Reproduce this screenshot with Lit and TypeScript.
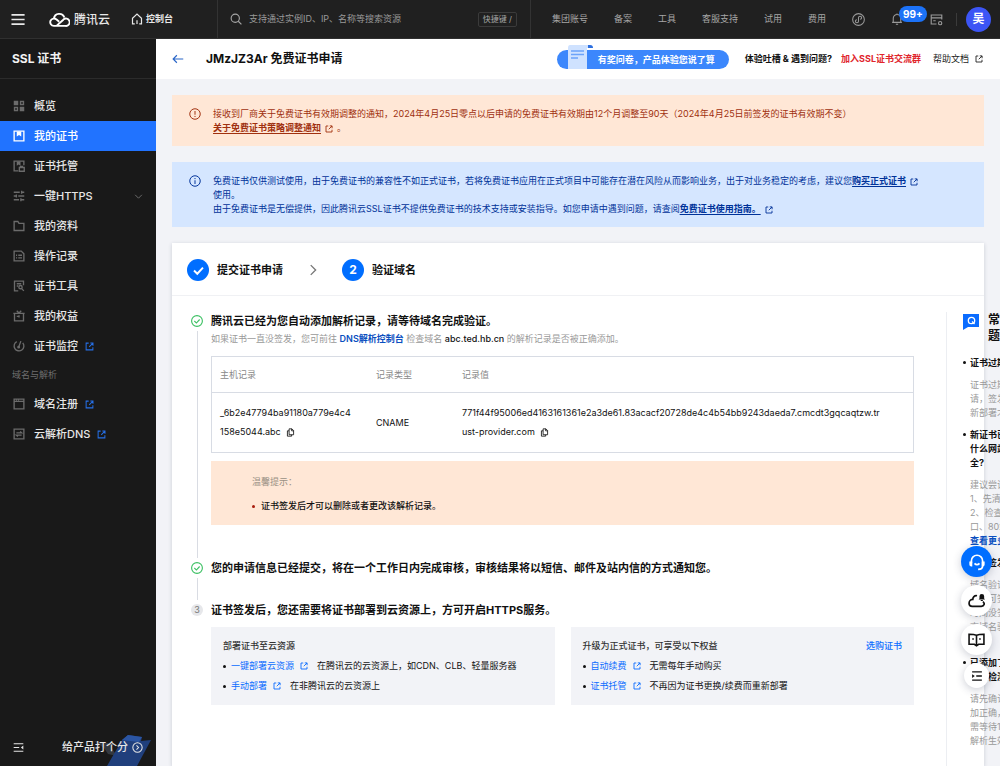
import { LitElement, html, css, svg, nothing } from "lit";
import { customElement, property } from "lit/decorators.js";

const icons: Record<string, unknown> = {
  menu: svg`<path d="M0.5 3h14M0.5 8h14M0.5 13h14" />`,
  home: svg`<path d="M5 14.500H2V7L8 1.500L14 7v7.500h-3M8 14.500V9.500" />`,
  search: svg`<circle cx="7" cy="7" r="5.500" /><path d="M11 11l4.200 4.200" />`,
  overview: svg`<path class="solid" d="M1 1h6v6H1zM9 9h6v6H9z" /><path d="M10 2h4v4h-4zM2 10h4v4H2z" />`,
  cert: svg`<path d="M1.500 1.500h13v13h-13z" /><path class="solid" d="M5 2h6v6.500L8 6.500L5 8.500z" />`,
  host: svg`<path d="M14.500 7V1.500h-13v13H7M8.500 10h6.500v5H8.500zM10 10V8.500h3.500" /><path class="solid" d="M5 2h5v5.500L7.500 6L5 7.500z" />`,
  sliders: svg`<path d="M1 3h8M12 3h3M11.500 1v4M1 8h3M7 8h8M4.500 6v4M1 13h7M11 13h4M10.500 11v4" />`,
  folder: svg`<path d="M1.500 14V2h5l1.500 2.500h6.500V14z" />`,
  record: svg`<path d="M1.500 1.500h9.500l3.500 3.500v9.500h-13zM4 7h1.500M7 7h5M4 10.500h1.500M7 10.500h5" />`,
  tool: svg`<path d="M14 7V1.500H2v13h5M5 5h6M5 8h2M14.500 14.500l-3-3" /><circle cx="10" cy="9.500" r="2.200" />`,
  gift: svg`<path d="M0.500 4.500h15M2 4.500v10h12v-10M5 1l3 3l3-3M5 8.500h3M8 7v3" />`,
  monitor: svg`<path d="M5 2.200A6.500 6.500 0 1 0 13 3.800M7.500 9.500L10.500 1.500" /><circle cx="7.500" cy="9.500" r="1" />`,
  domain: svg`<path d="M1.500 1.500h13v13h-13zM1.500 4.500h13M4 3h1M7 3h1" />`,
  dns: svg`<path d="M1.500 1.500h13v13h-13zM4.500 6.500h7l-2-1.800M11.500 9.500h-7l2 1.800" />`,
  collapse: svg`<path d="M1 2.500h14M1 8h8M1 13.500h14" /><path class="solid" d="M15 5.200v5.600L11.500 8z" />`,
  external: svg`<path d="M6.500 2H2v12h12V9.500M9.500 1.800h4.700v4.700M14 2L7.500 8.500" />`,
  chevronDown: svg`<path d="M2 5l6 6l6-6" />`,
  chevronRight: svg`<path d="M5 1.500L11.500 8L5 14.500" />`,
  circleArrow: svg`<circle cx="8" cy="8" r="6.800" /><path d="M6.500 5l3 3l-3 3" />`,
  back: svg`<path d="M15 8H1.500M6.500 3L1.500 8L6.500 13" />`,
  warn: svg`<circle cx="8" cy="8" r="7" /><path d="M8 4v5M8 10.500v1.500" />`,
  info: svg`<circle cx="8" cy="8" r="7" /><path d="M8 7v5M8 4v1.500" />`,
  check: svg`<path d="M2.500 8l4 4l7-7.500" />`,
  circleCheck: svg`<circle cx="8" cy="8" r="7.200" /><path d="M4.500 8l2.700 2.700L11.500 6" />`,
  copy: svg`<path d="M5.500 1.500h5l3 3v7.500h-8zM10 1.500v3.500h3.500M5.500 5H2.500v9.500H10V12" />`,
  compass: svg`<circle cx="8" cy="8" r="7.200" /><path d="M8 10.200a1.900 1.900 0 1 1-1.900-1.900M8 5.800a1.900 1.900 0 1 1 1.900 1.900M8 5.800v4.400" />`,
  bell: svg`<path d="M1.500 12.500h13M3 12.500V7a5 5 0 0 1 10 0v5.500M8 2V0.500M6.500 15h3" />`,
  panel: svg`<path d="M8 13.500H1.500v-11h13V8M1.500 6h13M4 9.500h3" /><circle cx="12.500" cy="12.500" r="2" />`,
  headset: svg`<path d="M3 9V7a5 5 0 0 1 10 0v4.500c0 1.800-1.500 3-4 3M5.800 9.200c1.300 1.600 3.100 1.600 4.400 0" /><path class="solid" d="M1.200 7.500h2.600v4.500H3A1.800 1.800 0 0 1 1.200 10.200zM14.800 7.500h-2.600v4.500h.8a1.800 1.800 0 0 0 1.800-1.800z" />`,
  cloudBell: svg`<path d="M8.500 3.500C6 3 4.500 5 4.500 7C2.500 7 1 8.500 1 10.500S2.500 13.500 4 13.500h8.500c3 0 3.500-3 1.500-4.500" /><path class="solid" d="M10 7h6L15.200 6V4a2.200 2.200 0 0 0-4.400 0v2zM12 7.500h2v1h-2z" />`,
  book: svg`<path d="M8 4C6 3 3.500 3 1 3v9.500h5l2 1.500l2-1.500h5V3c-2.500 0-5 0-7 1zM8 4v9.500M4 7.500h1.500M10.500 7.500H12" />`,
  outline: svg`<path d="M1.500 2.500h13M7 8h7.500M1.500 13.500h13" /><path class="solid" d="M1.500 5.500v5L5 8z" />`,
};

@customElement("ui-icon")
class UiIcon extends LitElement {
  @property() name = "";
  @property({ type: Number }) size = 12;
  @property({ type: Number }) weight = 1.5;

  static styles = css`
    :host { display: inline-flex; flex: none; vertical-align: middle; }
    svg { display: block; fill: none; stroke: currentColor; }
    .solid { fill: currentColor; stroke: none; }
  `;

  render() {
    return html`<svg viewBox="0 0 16 16" width=${this.size} height=${this.size} stroke-width=${this.weight} aria-hidden="true">${icons[this.name]}</svg>`;
  }
}

const icon = (name: string, size = 12, weight = 1.5) =>
  html`<ui-icon name=${name} size=${size} weight=${weight}></ui-icon>`;

@customElement("top-bar")
class TopBar extends LitElement {
  static styles = css`
    :host {
      display: flex; align-items: center; height: 39px; box-sizing: border-box;
      background: #202020; border-bottom: 1px solid #303030; color: #a6a6a6; font-size: 9px;
    }
    button { all: unset; display: flex; align-items: center; cursor: pointer; }
    a { color: inherit; text-decoration: none; }
    .left { display: flex; align-items: center; width: 218px; box-sizing: border-box; padding-left: 11px; border-right: 1px solid #333; height: 100%; color: #e8e8e8; }
    .brand { display: flex; align-items: center; gap: 4px; margin-left: 23px; font-size: 12px; font-weight: 500; line-height: 19px; }
    .console { display: flex; align-items: center; gap: 3px; margin-left: 21px; font-weight: 700; }
    .search { display: flex; align-items: center; flex: 1; min-width: 0; gap: 7px; padding: 0 13px 0 12px; height: 100%; border-right: 1px solid #333; }
    input { flex: 1; min-width: 0; padding: 0; border: 0; outline: 0; background: none; color: #ccc; font: inherit; }
    input::placeholder { color: #999; opacity: 1; }
    .key { padding: 0 4px; border: 1px solid #3b3b3b; border-radius: 2px; font-size: 8px; line-height: 13px; }
    nav { display: flex; gap: 26px; padding-left: 21px; }
    .tools { display: flex; align-items: center; padding: 0 9px 0 26px; color: #999; }
    .bell { position: relative; margin-left: 26px; }
    .badge { position: absolute; left: 8px; top: -7px; padding: 0 4px; border-radius: 8px; background: #1c72f7; color: #fff; font-size: 10px; font-weight: 700; line-height: 16px; }
    .panel { margin-left: 27px; }
    .split { width: 1px; height: 13px; margin: 0 9px 0 13px; background: #3b3b3b; }
    .avatar { width: 25px; height: 25px; border-radius: 50%; background: #3c55f5; color: #fff; font-size: 12px; font-weight: 700; justify-content: center; }
  `;

  render() {
    return html`
      <div class="left">
        <button aria-label="menu">${icon("menu", 15, 1.8)}</button>
        <a class="brand" href="#">
          <svg width="21" height="15" viewBox="0 0 21 15" fill="none" stroke="#fff" stroke-width="1.900" aria-hidden="true">
            <path d="M7.500 13.900L14.300 7.700A3.700 3.700 0 1 1 16.300 13.900H4.900A3.700 3.700 0 1 1 7.600 7.600L10.200 9.800M4.900 6.500A5.400 5.400 0 0 1 15.300 5.400" />
          </svg>
          <span>腾讯云</span>
        </a>
        <a class="console" href="#">${icon("home", 12, 1.6)}<span>控制台</span></a>
      </div>
      <label class="search">
        ${icon("search", 12)}
        <input type="search" aria-label="搜索" placeholder="支持通过实例ID、IP、名称等搜索资源" />
        <span class="key">快捷键 /</span>
      </label>
      <nav>${["集团账号", "备案", "工具", "客服支持", "试用", "费用"].map((t) => html`<a href="#">${t}</a>`)}</nav>
      <div class="tools">
        <button aria-label="explore">${icon("compass", 13, 1.3)}</button>
        <button class="bell" aria-label="messages">${icon("bell", 12, 1.4)}<span class="badge">99+</span></button>
        <button class="panel" aria-label="panel">${icon("panel", 13, 1.4)}</button>
        <span class="split"></span>
        <button class="avatar">吴</button>
      </div>
    `;
  }
}

interface MenuItem { icon: string; label: string; active?: boolean; external?: boolean; children?: boolean }

const mainMenu: MenuItem[] = [
  { icon: "overview", label: "概览" },
  { icon: "cert", label: "我的证书", active: true },
  { icon: "host", label: "证书托管" },
  { icon: "sliders", label: "一键HTTPS", children: true },
  { icon: "folder", label: "我的资料" },
  { icon: "record", label: "操作记录" },
  { icon: "tool", label: "证书工具" },
  { icon: "gift", label: "我的权益" },
  { icon: "monitor", label: "证书监控", external: true },
];
const domainMenu: MenuItem[] = [
  { icon: "domain", label: "域名注册", external: true },
  { icon: "dns", label: "云解析DNS", external: true },
];

@customElement("side-bar")
class SideBar extends LitElement {
  static styles = css`
    :host { display: flex; flex-direction: column; background: #191919; color: #e6e6e6; font-size: 11px; font-weight: 500; overflow: hidden; }
    h1 { margin: 0 0 12px; padding: 0 12px; font-size: 12px; line-height: 39px; font-weight: 700; color: #f2f2f2; border-bottom: 1px solid #2b2b2b; }
    a { display: flex; align-items: center; height: 30px; padding: 0 13px; color: inherit; text-decoration: none; }
    a .glyph { display: flex; color: #6b6b6b; margin-right: 9px; }
    a.active { background: #2173ff; color: #fff; }
    a.active .glyph { color: #fff; }
    .ext { display: flex; margin-left: 7px; color: #2670e8; }
    .fold { display: flex; margin-left: auto; color: #777; }
    .group { padding: 0 12px; color: #6e6e6e; font-size: 9px; line-height: 28px; font-weight: 400; }
    footer { position: relative; display: flex; align-items: center; height: 38px; margin-top: auto; padding: 0 12px 0 13px; white-space: nowrap; }
    footer button { all: unset; display: flex; flex: none; align-items: center; gap: 4px; position: relative; cursor: pointer; }
    .rate { margin-left: 38px; }
    .art { position: absolute; right: 4px; bottom: 0; }
  `;

  private item(m: MenuItem) {
    return html`<a href="#" class=${m.active ? "active" : ""}>
      <span class="glyph">${icon(m.icon, 12, 1.8)}</span>${m.label}
      ${m.external ? html`<span class="ext">${icon("external", 9, 1.8)}</span>` : nothing}
      ${m.children ? html`<span class="fold">${icon("chevronDown", 9)}</span>` : nothing}
    </a>`;
  }

  render() {
    return html`
      <h1>SSL 证书</h1>
      <nav>
        ${mainMenu.map((m) => this.item(m))}
        <div class="group">域名与解析</div>
        ${domainMenu.map((m) => this.item(m))}
      </nav>
      <footer>
        <svg class="art" width="58" height="32" viewBox="0 0 58 32" aria-hidden="true">
          <path d="M0 7l20 3l-3 3l6 9l-9-2l-4-6z" fill="#33383f" />
          <path d="M28 6l6-5l14 2l-1 4l10-1L43 32H13z" fill="#203f7c" />
          <path d="M28 6l6-5l14 2l-3 5z" fill="#2b55a3" />
        </svg>
        <button aria-label="collapse">${icon("collapse", 11)}</button>
        <button class="rate"><span>给产品打个分</span>${icon("circleArrow", 11)}</button>
      </footer>
    `;
  }
}

interface Faq { title: string; answer: string; more?: string }

const faqs: Faq[] = [
  { title: "证书过期怎么办", answer: "证书过期需重新申\n请，签发后需要重\n新部署才能生效" },
  { title: "新证书已部署为\n什么网站提示不安\n全?", answer: "建议尝试以下方法\n1、先清除缓存\n2、检查443端\n口、80端口", more: "查看更多" },
  { title: "未能签发怎么办", answer: "域名验证通过后\n日内可签发，长\n时间没签发请检\n查域名验证结\n果" },
  { title: "已添加了解析\n但是检测失败", answer: "请先确认解析添\n加正确，解析后\n需等待10分钟\n解析生效" },
];

@customElement("faq-panel")
class FaqPanel extends LitElement {
  static styles = css`
    :host { display: block; color: #111; font-size: 9px; line-height: 14px; }
    header { display: flex; gap: 9px; margin-bottom: 12px; }
    header svg { flex: none; margin-top: 2px; }
    h2, dt, dd { white-space: pre; }
    h2 { margin: 0; font-size: 12px; line-height: 16px; font-weight: 700; }
    dl { margin: 0; }
    dt { display: flex; gap: 4px; font-weight: 700; }
    dt::before { content: ""; flex: none; width: 3px; height: 3px; margin-top: 5px; border-radius: 50%; background: #111; }
    dd { margin: 8px 0 8px 7px; color: #999; }
    a { display: block; color: #0a4fc0; font-weight: 700; text-decoration: none; }
  `;

  render() {
    return html`
      <header>
        <svg width="16" height="16" viewBox="0 0 16 16" aria-hidden="true">
          <path d="M0 0h16v13H5l-5 3z" fill="#0a6cff" />
          <circle cx="8.500" cy="6.500" r="3.200" fill="none" stroke="#fff" stroke-width="1.300" />
          <path d="M9 7.500l2.500 2.500" stroke="#fff" stroke-width="1.300" />
        </svg>
        <h2>${"常见问\n题"}</h2>
      </header>
      <dl>${faqs.map((f) => html`<dt>${f.title}</dt><dd>${f.answer}${f.more ? html`<a href="#">${f.more}</a>` : nothing}</dd>`)}</dl>
    `;
  }
}

@customElement("app-root")
class AppRoot extends LitElement {
  static styles = css`
    :host {
      display: grid; grid-template: auto 1fr / 156px minmax(0, 1fr); height: 100vh; overflow: hidden;
      font-family: Inter, "Noto Sans CJK SC", sans-serif; font-size: 9px; line-height: 14px; color: #111; background: #f2f3f7;
    }
    top-bar { grid-column: 1 / 3; }
    a { color: #0a6cff; text-decoration: none; }
    button { all: unset; cursor: pointer; }
    .page { display: flex; flex-direction: column; min-width: 0; overflow: hidden; }
    .head { display: flex; align-items: center; flex: none; height: 40px; padding: 0 17px 0 16px; background: #fff; }
    .back { display: flex; color: #2a66c8; margin-right: 22px; }
    .head h2 { flex: 1; margin: 0; font-size: 12px; font-weight: 700; }
    .promo { position: relative; width: 172px; box-sizing: border-box; padding-left: 41px; border-radius: 10px; background: #3c87fc; color: #fff; font-weight: 700; line-height: 19px; margin-right: 16px; }
    .paper { position: absolute; left: 9px; bottom: 0; }
    .talk { font-weight: 700; margin-right: 9px; }
    .group { color: #e0252c; font-weight: 700; margin-right: 12px; }
    .docs { display: flex; align-items: center; gap: 6px; color: #222; }
    .content { display: flex; flex-direction: column; flex: 1; gap: 16px; padding: 16px 16px 0; min-height: 0; }
    .alert { display: flex; flex: none; gap: 12px; padding: 12px 56px 11px 17px; }
    .alert p { margin: 0; }
    .alert ui-icon { margin-top: 1px; }
    .alert a { color: inherit; font-weight: 700; text-decoration: underline; text-underline-offset: 2px; }
    .alert p > ui-icon { margin: 0 4px; }
    .warn { background: #ffe7d6; color: #a0300f; }
    .info { background: #d5e6ff; color: #003299; }
    .card { display: flex; flex-direction: column; flex: 1; min-height: 0; background: #fff; box-shadow: 0 1px 4px rgba(40, 50, 80, 0.2); }
    .stages { display: flex; align-items: center; padding: 16px 15px 14px; border-bottom: 1px solid #f0f1f4; font-size: 11px; font-weight: 700; }
    .dot { display: flex; align-items: center; justify-content: center; width: 22px; height: 22px; margin-right: 8px; border-radius: 50%; background: #006eff; color: #fff; font-size: 12px; }
    .stages > ui-icon { margin: 0 23px 0 24px; color: #777; }
    .body { display: flex; flex: 1; padding: 16px 0 0 19px; }
    .steps { flex: 1; min-width: 0; list-style: none; margin: 0; padding: 0 32px 0 0; }
    .step { display: flex; gap: 8px; }
    .rail { display: flex; flex-direction: column; align-items: center; width: 12px; flex: none; padding-top: 3px; color: #3cc063; }
    .rail::after { content: ""; flex: 1; width: 1px; margin: 4px 0 1px; background: #d9dce3; }
    .step:last-child .rail::after { content: none; }
    .num { width: 12px; border-radius: 50%; background: #e6e7ea; color: #777; line-height: 12px; text-align: center; }
    .what { flex: 1; min-width: 0; }
    .first .what { padding-bottom: 34px; }
    .second .what { padding-bottom: 24px; }
    h3 { margin: 0; font-size: 11px; line-height: 18px; font-weight: 700; }
    .desc { margin: 0 0 8px; line-height: 18px; color: #999; }
    .desc a { color: #0a4fc0; font-weight: 600; }
    .desc b { color: #111; font-weight: 500; }
    table { width: 100%; table-layout: fixed; border-collapse: collapse; border: 1px solid #d8dce4; line-height: 19px; }
    th, td { padding: 10px 8px 11px; text-align: left; font-weight: 400; }
    th { padding: 8px; color: #888; border-bottom: 1px solid #d8dce4; }
    .c1 { width: 140px; }
    .c2 { width: 70px; }
    .copy { display: inline-flex; margin-left: 3px; vertical-align: middle; }
    .tip { margin-top: 8px; padding: 12px 41px 10px; background: #ffe7d6; line-height: 18px; }
    .tip p { margin: 0 0 6px; color: #999084; }
    ul { list-style: none; margin: 0; padding: 0; }
    ul li { display: flex; align-items: center; }
    ul li::before { content: ""; width: 3px; height: 3px; margin-right: 5px; border-radius: 50%; background: #111; }
    .tip li { font-weight: 500; }
    .tip li::before { background: #a81c0c; margin-right: 6px; }
    .boxes { display: grid; grid-template-columns: 1fr 1fr; gap: 16px; margin-top: 8px; }
    .box { padding: 9px 12px; background: #f2f3f7; line-height: 20px; }
    .box header { display: flex; justify-content: space-between; font-weight: 500; color: #333; }
    .box ui-icon { margin: 0 9px 0 6px; color: #0a6cff; }
    faq-panel { flex: 0 0 38px; min-width: 0; box-sizing: border-box; padding-left: 16px; border-left: 1px solid #eceef2; }
    .float { position: fixed; right: 8px; top: 546px; display: flex; flex-direction: column; align-items: center; gap: 8px; }
    .float button { display: flex; align-items: center; justify-content: center; width: 31px; height: 31px; border-radius: 50%; background: #fff; color: #111; box-shadow: 0 2px 8px rgba(40, 50, 80, 0.24); }
    .float .help { background: #006eff; color: #fff; }
    .float .small { width: 25px; height: 25px; }
  `;

  private links(rows: [string, string][]) {
    return html`<ul>${rows.map(([a, t]) => html`<li><a href="#">${a}</a>${icon("external", 8, 1.8)}<span>${t}</span></li>`)}</ul>`;
  }

  private copy() {
    return html`<button class="copy" aria-label="复制">${icon("copy", 9)}</button>`;
  }

  render() {
    return html`
      <top-bar></top-bar>
      <side-bar></side-bar>
      <main class="page">
        <div class="head">
          <a class="back" href="#" aria-label="返回">${icon("back", 12)}</a>
          <h2>JMzJZ3Ar 免费证书申请</h2>
          <a class="promo" href="#">
            <svg class="paper" width="30" height="24" viewBox="0 0 30 24" aria-hidden="true">
              <path d="M4 0h20q3 0 3 3h-6v21H2V3q0-3 2-3z" fill="#cfe2ff" />
              <path d="M22 0h2q3 0 3 3h-5z" fill="#2c6fe0" />
              <path d="M5 6h13M5 9.500h13M5 13h7" stroke="#6ba3fa" stroke-width="1.300" />
            </svg>
            有奖问卷，产品体验您说了算
          </a>
          <span class="talk">体验吐槽 &amp; 遇到问题?</span>
          <a class="group" href="#">加入SSL证书交流群</a>
          <a class="docs" href="#">帮助文档 ${icon("external", 8, 1.8)}</a>
        </div>
        <div class="content">
          <section class="alert warn">
            ${icon("warn", 12, 1.3)}
            <p>接收到厂商关于免费证书有效期调整的通知，2024年4月25日零点以后申请的免费证书有效期由12个月调整至90天（2024年4月25日前签发的证书有效期不变）<br />
            <a href="#">关于免费证书策略调整通知</a>${icon("external", 8, 1.8)}。</p>
          </section>
          <section class="alert info">
            ${icon("info", 12, 1.3)}
            <p>免费证书仅供测试使用，由于免费证书的兼容性不如正式证书，若将免费证书应用在正式项目中可能存在潜在风险从而影响业务，出于对业务稳定的考虑，建议您<a href="#">购买正式证书</a>${icon("external", 8, 1.8)}<br />使用。<br />
            由于免费证书是无偿提供，因此腾讯云SSL证书不提供免费证书的技术支持或安装指导。如您申请中遇到问题，请查阅<a href="#">免费证书使用指南。</a>${icon("external", 8, 1.8)}</p>
          </section>
          <section class="card">
            <div class="stages">
              <span class="dot">${icon("check", 13, 2.4)}</span>提交证书申请
              ${icon("chevronRight", 12, 1.8)}
              <span class="dot">2</span>验证域名
            </div>
            <div class="body">
              <ol class="steps">
                <li class="step first">
                  <div class="rail">${icon("circleCheck", 12)}</div>
                  <div class="what">
                    <h3>腾讯云已经为您自动添加解析记录，请等待域名完成验证。</h3>
                    <p class="desc">如果证书一直没签发，您可前往 <a href="#">DNS解析控制台</a> 检查域名 <b>abc.ted.hb.cn</b> 的解析记录是否被正确添加。</p>
                    <table>
                      <thead><tr><th class="c1">主机记录</th><th class="c2">记录类型</th><th>记录值</th></tr></thead>
                      <tbody><tr>
                        <td>_6b2e47794ba91180a779e4c4<br />158e5044.abc ${this.copy()}</td>
                        <td>CNAME</td>
                        <td>771f44f95006ed4163161361e2a3de61.83acacf20728de4c4b54bb9243daeda7.cmcdt3gqcaqtzw.tr<br />ust-provider.com ${this.copy()}</td>
                      </tr></tbody>
                    </table>
                    <div class="tip">
                      <p>温馨提示：</p>
                      <ul><li>证书签发后才可以删除或者更改该解析记录。</li></ul>
                    </div>
                  </div>
                </li>
                <li class="step second">
                  <div class="rail">${icon("circleCheck", 12)}</div>
                  <div class="what"><h3>您的申请信息已经提交，将在一个工作日内完成审核，审核结果将以短信、邮件及站内信的方式通知您。</h3></div>
                </li>
                <li class="step">
                  <div class="rail"><span class="num">3</span></div>
                  <div class="what">
                    <h3>证书签发后，您还需要将证书部署到云资源上，方可开启HTTPS服务。</h3>
                    <div class="boxes">
                      <section class="box">
                        <header>部署证书至云资源</header>
                        ${this.links([["一键部署云资源", "在腾讯云的云资源上，如CDN、CLB、轻量服务器"], ["手动部署", "在非腾讯云的云资源上"]])}
                      </section>
                      <section class="box">
                        <header>升级为正式证书，可享受以下权益<a href="#">选购证书</a></header>
                        ${this.links([["自动续费", "无需每年手动购买"], ["证书托管", "不再因为证书更换/续费而重新部署"]])}
                      </section>
                    </div>
                  </div>
                </li>
              </ol>
              <faq-panel></faq-panel>
            </div>
          </section>
        </div>
      </main>
      <div class="float">
        <button class="help" aria-label="客服">${icon("headset", 18, 1.5)}</button>
        <button aria-label="消息">${icon("cloudBell", 17, 1.6)}</button>
        <button aria-label="文档">${icon("book", 17, 1.5)}</button>
        <button class="small" aria-label="目录">${icon("outline", 12, 1.8)}</button>
      </div>
    `;
  }
}
